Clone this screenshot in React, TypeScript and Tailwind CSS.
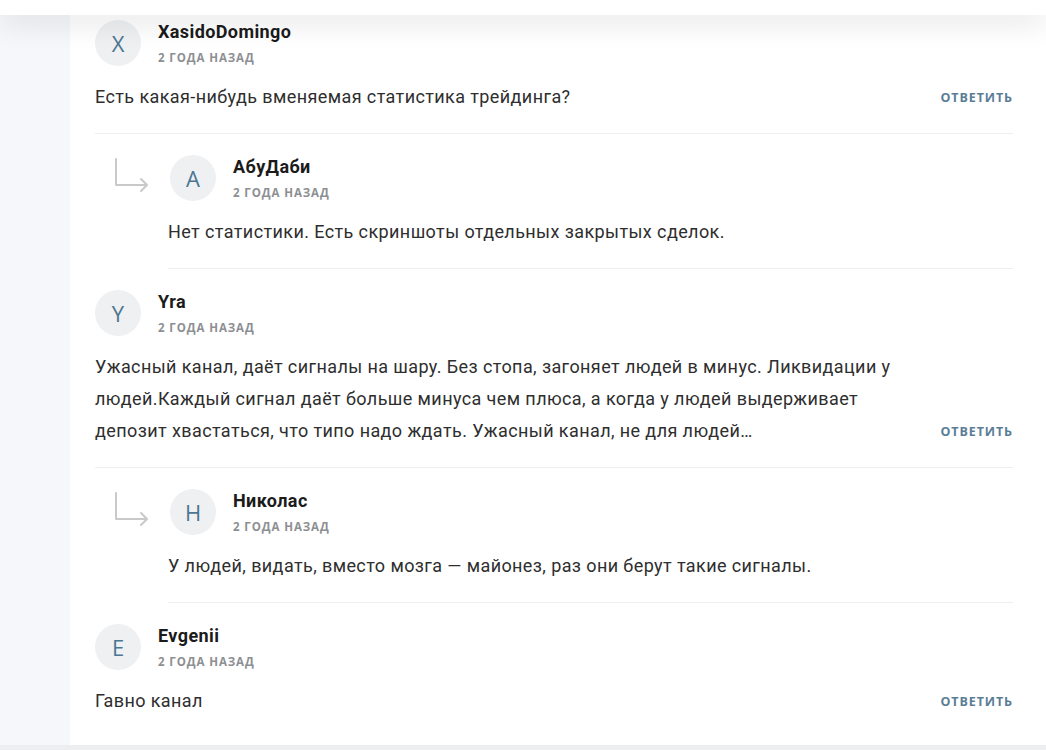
import { ReactNode } from 'react'

interface CommentProps {
  letter: string;
  name: string;
  date: string;
  text: ReactNode;
  reply?: boolean;
  first?: boolean;
  last?: boolean;
}

function ReplyArrow() {
  return (
    <svg width="38" height="36" viewBox="0 0 38 36" fill="none" className="text-[#c9c9cb]">
      <path d="M3 2 V28 H33" stroke="currentColor" strokeWidth="2" strokeLinecap="round" strokeLinejoin="round" />
      <path d="M28 22 L34 28 L28 34" stroke="currentColor" strokeWidth="2" strokeLinecap="round" strokeLinejoin="round" />
    </svg>
  )
}

function Comment({ letter, name, date, text, reply, first, last }: CommentProps) {
  return (
    <div className={`flex ${reply ? 'pl-[18px]' : ''}`}>
      {reply && (
        <div className="w-[55px] shrink-0 pt-[23px]">
          <ReplyArrow />
        </div>
      )}
      <div className={`flex-1 ${first ? 'pt-[5px]' : 'pt-[21px]'} ${last ? '' : 'border-b border-[#efefef]'} pb-[20px]`}>
        <div className={`flex items-start gap-[17px] ${reply ? 'pl-[2px]' : ''}`}>
          <div className="w-[46px] h-[46px] rounded-full bg-[#eff0f2] flex items-center justify-center text-[22px] font-medium text-[#4a7693] font-['Open_Sans',sans-serif]">
            {letter}
          </div>
          <div className="flex flex-col pt-[1px]">
            <span className="text-[18px] leading-[22px] font-bold tracking-[0.4px] text-[#1b1b1b] font-['Roboto',sans-serif]">{name}</span>
            <span className="mt-[8px] text-[11.5px] leading-[14px] font-bold tracking-[0.9px] text-[#8d8f93] font-['Open_Sans',sans-serif]">{date}</span>
          </div>
        </div>
        <div className="flex items-end justify-between mt-[15px]">
          <p className="max-w-[815px] text-[18px] leading-[32px] tracking-[0.4px] text-[#2e2e2e] font-['Roboto',sans-serif]">{text}</p>
          {!reply && (
            <button className="mb-[7px] text-[12.5px] leading-[16px] font-bold tracking-[0.9px] text-[#5a7d96] font-['Open_Sans',sans-serif]">
              ОТВЕТИТЬ
            </button>
          )}
        </div>
      </div>
    </div>
  )
}

export default function App() {
  return (
    <div className="w-[1046px] h-[750px] overflow-hidden bg-[#f5f7fa] flex flex-col">
      <div className="h-[15px] bg-white shrink-0 relative z-10 shadow-[0_6px_30px_rgba(0,0,0,0.14)]" />
      <div className="flex flex-1 min-h-0">
        <div className="w-[70px] shrink-0" />
        <main className="flex-1 bg-white pl-[25px] pr-[33px] h-[730px]">
          <Comment
            first
            letter="X"
            name="XasidoDomingo"
            date="2 ГОДА НАЗАД"
            text="Есть какая-нибудь вменяемая статистика трейдинга?"
          />
          <Comment
            reply
            letter="А"
            name="АбуДаби"
            date="2 ГОДА НАЗАД"
            text="Нет статистики. Есть скриншоты отдельных закрытых сделок."
          />
          <Comment
            letter="Y"
            name="Yra"
            date="2 ГОДА НАЗАД"
            text="Ужасный канал, даёт сигналы на шару. Без стопа, загоняет людей в минус. Ликвидации у людей.Каждый сигнал даёт больше минуса чем плюса, а когда у людей выдерживает депозит хвастаться, что типо надо ждать. Ужасный канал, не для людей…"
          />
          <Comment
            reply
            letter="Н"
            name="Николас"
            date="2 ГОДА НАЗАД"
            text="У людей, видать, вместо мозга — майонез, раз они берут такие сигналы."
          />
          <Comment
            last
            letter="E"
            name="Evgenii"
            date="2 ГОДА НАЗАД"
            text="Гавно канал"
          />
        </main>
      </div>
      <div className="h-[5px] bg-[#eceef0] shrink-0" />
    </div>
  )
}
